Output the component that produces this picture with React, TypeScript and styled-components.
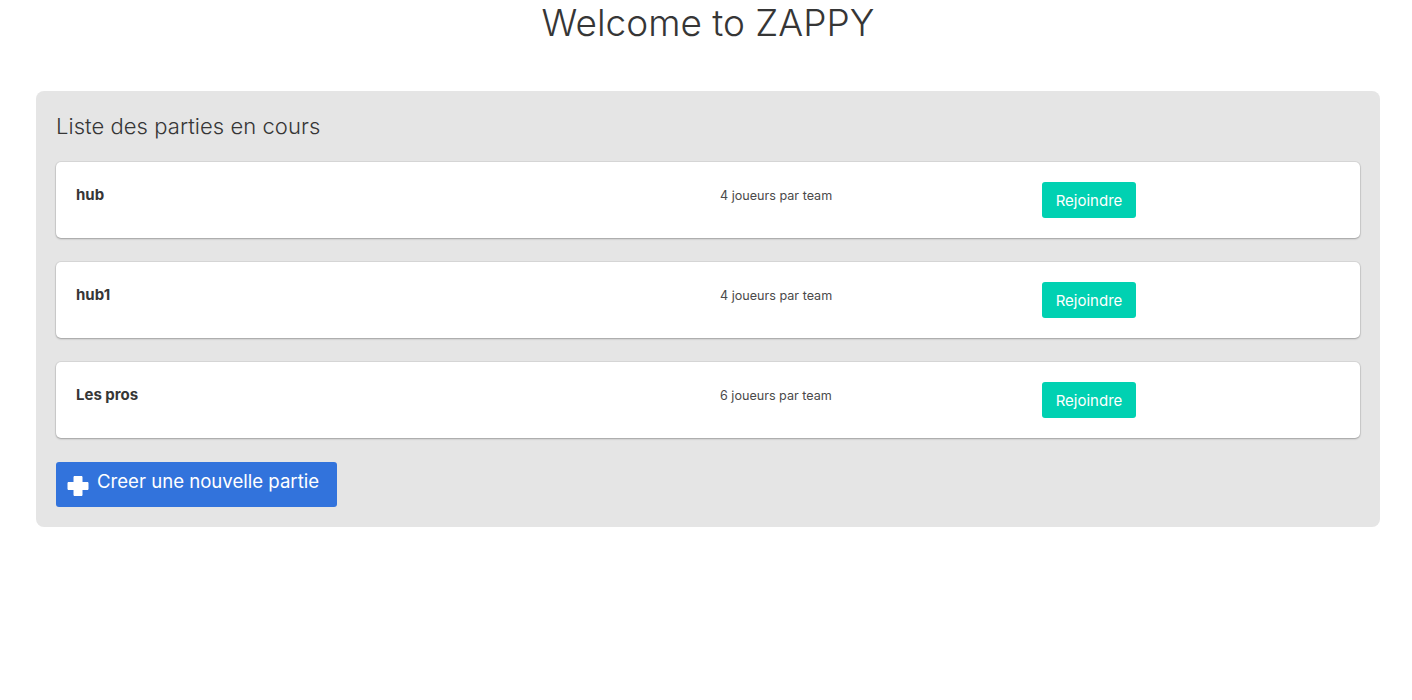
import React from 'react';
import styled, {createGlobalStyle} from 'styled-components';

type Game = {name: string; players: number};

const games: Game[] = [
  {name: 'hub', players: 4},
  {name: 'hub1', players: 4},
  {name: 'Les pros', players: 6},
];

const GlobalStyle = createGlobalStyle`
  html, body {
    margin: 0;
    padding: 0;
    background: #fff;
    font-family: Inter, "Helvetica Neue", Arial, sans-serif;
    color: #363636;
  }
`;

const PlusIcon: React.FC = () => (
  <svg width="22" height="22" viewBox="0 0 22 22" aria-hidden>
    <path
      d="M7 1.5h8v6h6v7h-6v6H7v-6H1v-7h6z"
      fill="#fff"
      stroke="#fff"
      strokeWidth="1"
      strokeLinejoin="round"
    />
  </svg>
);

const App: React.FC = () => {
  return (
    <>
      <GlobalStyle />
      <Page>
        <Title>Welcome to ZAPPY</Title>
        <Panel>
          <PanelTitle>Liste des parties en cours</PanelTitle>
          <GameList>
            {games.map(game => (
              <GameCard key={game.name}>
                <GameName>{game.name}</GameName>
                <Players>{game.players} joueurs par team</Players>
                <div>
                  <JoinButton>Rejoindre</JoinButton>
                </div>
              </GameCard>
            ))}
          </GameList>
          <CreateButton>
            <PlusIcon />
            <span>Creer une nouvelle partie</span>
          </CreateButton>
        </Panel>
      </Page>
    </>
  );
};

const Page = styled.div`
  padding: 0 32px 0 36px;
`;

const Title = styled.h1`
  margin: 0;
  height: 89px;
  padding-top: 2px;
  font-size: 37px;
  font-weight: 300;
  line-height: 42px;
  text-align: center;
  color: #363636;
`;

const Panel = styled.section`
  background: #e5e5e5;
  border-radius: 8px;
  padding: 20px;
  display: flex;
  flex-direction: column;
  align-items: flex-start;
`;

const PanelTitle = styled.h2`
  margin: 0 0 21px;
  font-size: 22px;
  font-weight: 300;
  line-height: 30px;
  color: #363636;
  letter-spacing: 0.05px;
`;

const GameList = styled.div`
  align-self: stretch;
  display: flex;
  flex-direction: column;
  gap: 24px;
  margin-bottom: 24px;
`;

const GameCard = styled.div`
  background: #fff;
  border-radius: 5px;
  box-shadow: 0 1px 2px rgba(10, 10, 10, 0.28), 0 0 0 1px rgba(10, 10, 10, 0.06);
  padding: 20px;
  display: grid;
  grid-template-columns: 644fr 322fr 298fr;
  align-items: start;
`;

const GameName = styled.div`
  padding-top: 1px;
  font-size: 15px;
  font-weight: 700;
  line-height: 24px;
  color: #363636;
`;

const Players = styled.div`
  padding-top: 2px;
  font-size: 12.6px;
  line-height: 24px;
  color: #4a4a4a;
`;

const JoinButton = styled.button`
  height: 36px;
  width: 94px;
  border: none;
  border-radius: 3px;
  background: #00d1b2;
  color: #fff;
  font-family: inherit;
  font-size: 15px;
  padding: 0;
  cursor: pointer;
`;

const CreateButton = styled.button`
  display: flex;
  align-items: center;
  gap: 8px;
  height: 45px;
  width: 281px;
  padding: 2px 11px 0;
  border: none;
  border-radius: 3px;
  background: #3273dc;
  color: #fff;
  font-family: inherit;
  font-size: 18.6px;
  cursor: pointer;

  span {
    margin-top: -10px;
  }
`;

export default App;
